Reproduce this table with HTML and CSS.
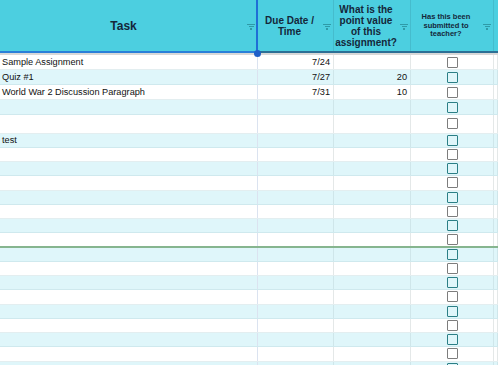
FILE: index.html
```html
<!DOCTYPE html>
<html>
<head>
<meta charset="utf-8">
<link rel="stylesheet" href="styles.css">
</head>
<body>
<div class="sheet">
  <div class="head">
    <div class="hc task sel"><span class="ht big">Task</span><span class="filter"></span><span class="dot"></span></div>
    <div class="hc"><span class="ht">Due Date /<br>Time</span><span class="filter"></span></div>
    <div class="hc"><span class="ht">What is the<br>point value<br>of this<br>assignment?</span><span class="filter"></span></div>
    <div class="hc"><span class="ht small">Has this been<br>submitted to<br>teacher?</span><span class="filter"></span></div>
    <div class="hc edge"></div>
  </div>
  <div class="body" id="body"></div>
</div>
<script>
const data = [
  ["Sample Assignment","7/24",""],
  ["Quiz #1","7/27","20"],
  ["World War 2 Discussion Paragraph","7/31","10"],
  ["","",""],
  ["","",""],
  ["test","",""]
];
const body = document.getElementById('body');
for (let i = 0; i < 22; i++) {
  const d = data[i] || ["","",""];
  const r = document.createElement('div');
  r.className = 'row ' + (i % 2 ? 'alt' : 'plain') + (i === 4 ? ' tall' : '') + (i < 4 ? ' first' : '') + (i === 12 ? ' green' : '');
  r.innerHTML = '<div class="c t">' + d[0] + '</div><div class="c n">' + d[1] + '</div><div class="c n">' + d[2] + '</div><div class="c cb"><span class="box"></span></div><div class="c"></div>';
  body.appendChild(r);
}
</script>
</body>
</html>
```

FILE: styles.css
```css
html, body { margin: 0; padding: 0; background: #fff; }
body { font-family: "Liberation Sans", Arial, sans-serif; width: 498px; height: 365px; overflow: hidden; }
.sheet { width: 498px; }
.head {
  display: grid;
  grid-template-columns: 258px 76px 77px 83px 4px;
  height: 51px;
  background: #4ccfe0;
  border-bottom: 2px solid #2c6f95;
}
.hc {
  position: relative;
  display: flex;
  align-items: center;
  border-right: 1px solid #45bccd;
  color: #14273a;
  font-weight: bold;
}
.hc.sel { border-right: 2px solid #1f6fd6; }
.hc.edge { border-right: none; }
.ht {
  flex: 1;
  text-align: center;
  font-size: 10px;
  line-height: 11px;
  padding-top: 1px;
}
.ht.big { font-size: 12px; padding-left: 2px; }
.ht.small { font-size: 7.5px; line-height: 8.5px; }
.filter {
  width: 8px;
  height: 6px;
  margin: 2px 2px 0 2px;
  flex: none;
  background:
    linear-gradient(#2f9aa8,#2f9aa8) 0 0/8px 1px no-repeat,
    linear-gradient(#2f9aa8,#2f9aa8) 1.5px 2px/5px 1px no-repeat,
    linear-gradient(#2f9aa8,#2f9aa8) 3px 4px/2px 2px no-repeat;
}
.hc.task .filter { margin-right: 1px; }
.dot {
  position: absolute;
  right: -5px;
  bottom: -6px;
  width: 7px;
  height: 7px;
  border-radius: 50%;
  background: #1f5fc8;
  z-index: 2;
}
.task::after {
  content: "";
  position: absolute;
  left: 0; right: 0; bottom: -2px;
  height: 2px;
  background: #2a7fd8;
}
.body { border-top: 2px solid #d8d8d8; }
.row {
  display: grid;
  grid-template-columns: 258px 76px 77px 83px 4px;
  height: 14.25px;
  box-sizing: border-box;
  border-bottom: 1px solid #e3eef0;
  font-size: 9.2px;
  color: #111;
}
.row.first { height: 15px; }
.row.tall { height: 18.5px; }
.row.alt { background: #dff6fa; border-bottom-color: #cfe9ee; }
.row.green { border-bottom: 2px solid #86b58f; }
.c {
  border-right: 1px solid #e4e8e8;
  display: flex;
  align-items: center;
  overflow: hidden;
  white-space: nowrap;
}
.alt .c { border-right-color: #cfe6ea; }
.c.t { padding-left: 2px; border-right-color: #dbe3f0; }
.c.n { justify-content: flex-end; padding-right: 3px; }
.c.cb { justify-content: center; }
.box {
  width: 9px;
  height: 9px;
  border: 1.5px solid #7d7d7d;
  border-radius: 1px;
  background: #fff;
}
.alt .box { border-color: #2b7f86; background: transparent; }
```
